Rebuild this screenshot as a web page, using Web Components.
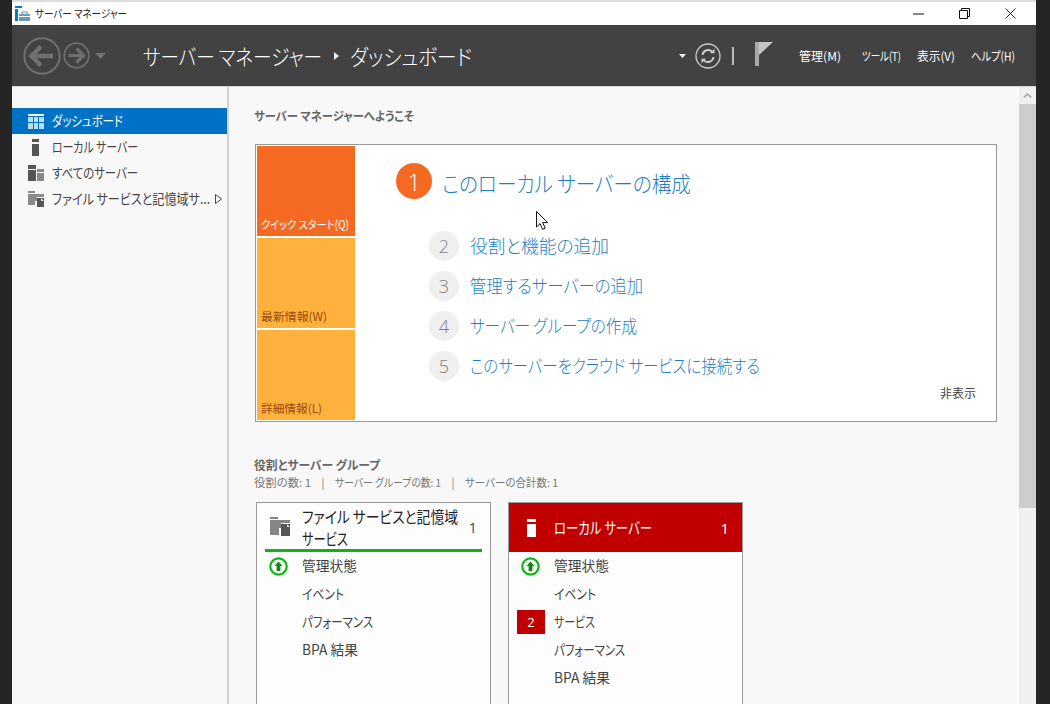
<!DOCTYPE html>
<html lang="ja"><head><meta charset="utf-8"><title>サーバー マネージャー</title>
<style>
html,body{margin:0;padding:0;width:1050px;height:704px;overflow:hidden;background:#252525}
body{font-family:"Noto Sans CJK JP","Noto Sans",sans-serif;font-feature-settings:"palt";color:#444}
</style></head><body>
<sm-app></sm-app>
<script>
const base=`:host{font-feature-settings:"palt";box-sizing:border-box}*{box-sizing:border-box}svg{display:block;flex:none}`;
customElements.define('fit-text',class extends HTMLElement{
  constructor(){super();this.attachShadow({mode:'open'})}
  connectedCallback(){
    const w=+this.getAttribute('w');
    this.shadowRoot.innerHTML=`<style>:host{display:inline-block;width:${w}px;white-space:pre}span{display:inline-block;width:max-content;transform-origin:0 50%}</style><span><slot></slot></span>`;
    const s=this.shadowRoot.querySelector('span');
    const n=s.getBoundingClientRect().width;
    if(n>0)s.style.transform=`scaleX(${w/n})`;
  }
});
function def(name,html){
  customElements.define(name,class extends HTMLElement{
    constructor(){super();this.attachShadow({mode:'open'})}
    connectedCallback(){
      const a=n=>this.getAttribute(n)||'';
      this.shadowRoot.innerHTML='<style>'+base+html.css+'</style>'+(typeof html.html==='function'?html.html(a):html.html);
    }
  });
}
const ICONS={
 dash:`<svg width="16" height="15" viewBox="0 0 16 15"><rect width="16" height="2" fill="#fff"/><g fill="#bcdcf2"><rect y="3" width="5" height="5"/><rect x="6" y="3" width="4" height="5"/><rect x="11" y="3" width="5" height="5"/><rect y="9" width="5" height="6"/><rect x="6" y="9" width="4" height="6"/><rect x="11" y="9" width="5" height="6"/></g></svg>`,
 server:`<svg width="16" height="17" viewBox="0 0 16 17"><rect x="4" width="7" height="3" fill="#555"/><rect x="4" y="5" width="7" height="12" fill="#555"/></svg>`,
 all:`<svg width="16" height="16" viewBox="0 0 16 16"><rect width="8" height="4" fill="#555"/><rect y="5" width="8" height="11" fill="#555"/><rect x="9" y="4" width="7" height="3" fill="#888"/><rect x="9" y="8" width="7" height="8" fill="#888"/></svg>`,
 file:`<svg width="16" height="16" viewBox="0 0 16 16"><path d="M0 0h7v2H0zM0 3h16v3H9v4H7v4H0z" fill="#8a8a8a"/><path d="M9 7h7v9H9z" fill="#555"/><path d="M13 7l3 3h-3z" fill="#ddd"/></svg>`,
 file2:`<svg width="20" height="20" viewBox="0 0 20 20"><path d="M0 0h8v2H0zM0 3h20v3H11v5H9v7H0z" fill="#858585"/><path d="M11 7h9v12h-9z" fill="#555"/><path d="M17 7l3 3h-3z" fill="#ddd"/></svg>`,
 up:`<svg width="19" height="19" viewBox="0 0 19 19"><circle cx="9.500" cy="9.500" r="8.200" fill="#fff" stroke="#0fb40f" stroke-width="2.200"/><path d="M9.500 4.500l4 4.600H11.400v5H7.600v-5H5.500z" fill="#0a8f0a"/></svg>`
};
def('sm-titlebar',{css:`:host{display:flex;align-items:center;height:23px;background:#fff;padding-left:3px;font-size:11px;color:#222}
 .t{margin-left:5px;line-height:23px;flex:1}.w{display:flex}.w svg{margin-right:35px}.w svg:last-child{margin-right:20px}`,
 html:`<svg width="15" height="15" viewBox="0 0 15 15"><path d="M0 0h7v2H0zM0 3h3v12H0z" fill="#0a78c8"/><path d="M4 8h11v7H4z" fill="#6d9ab5"/><path d="M7 8V6h5v2" fill="none" stroke="#6d9ab5" stroke-width="1.200"/><path d="M4 10.500h11" stroke="#fff"/></svg>
 <span class="t"><fit-text w="92">サーバー マネージャー</fit-text></span>
 <div class="w"><svg width="11" height="11" viewBox="0 0 11 11"><path d="M0 6h11" stroke="#111"/></svg>
 <svg width="11" height="11" viewBox="0 0 11 11" fill="none" stroke="#111"><path d="M.5 2.500h8v8h-8zM2.500 2.500v-2h8v8h-2"/></svg>
 <svg width="11" height="11" viewBox="0 0 11 11"><path d="M.5.500l10 10M10.500.500l-10 10" stroke="#222"/></svg></div>`});
def('sm-header',{css:`:host{display:flex;align-items:center;height:62px;background:#424242;color:#fff;border-bottom:1px solid #d6d6d6;padding-left:11px;padding-right:21px}
 .nav{display:flex;align-items:center;width:120px}
 .crumb{display:flex;align-items:center;font-size:22px;font-weight:300;flex:1;line-height:30px;margin-top:-2px}
 .crumb svg{margin:2px 11px 0 12px}
 .tools{display:flex;align-items:center}
 .menu{display:flex;font-size:12px;align-items:center;margin-left:26px}`,
 html:`<div class="nav">
 <svg width="38" height="38" viewBox="0 0 38 38" fill="none" stroke="#6f6f6f"><circle cx="19" cy="19" r="17.700" stroke-width="2"/><path d="M30 19H9M18 9.500L8.500 19l9.500 9.500" stroke-width="4.500"/></svg>
 <svg style="margin-left:2px" width="27" height="27" viewBox="0 0 27 27" fill="none" stroke="#6f6f6f"><circle cx="13.500" cy="13.500" r="12.300" stroke-width="1.700"/><path d="M5.500 13.500h15M13.500 6.500l7 7-7 7" stroke-width="3.200"/></svg>
 <svg style="margin-left:5px" width="11" height="6" viewBox="0 0 11 6"><path d="M0 0h11L5.500 6z" fill="#6f6f6f"/></svg></div>
 <div class="crumb"><fit-text w="179">サーバー マネージャー</fit-text><svg width="5" height="8" viewBox="0 0 5 8"><path d="M0 0l5 4-5 4z" fill="#eee"/></svg><fit-text w="122">ダッシュボード</fit-text></div>
 <div class="tools">
 <svg width="7" height="4" viewBox="0 0 7 4"><path d="M0 0h7L3.500 4z" fill="#eee"/></svg>
 <svg style="margin-left:9px" width="26" height="26" viewBox="0 0 26 26" fill="none" stroke="#ccc"><circle cx="13" cy="13" r="12" stroke-width="1.300"/><path d="M7.500 12a5.700 5.700 0 0 1 10-3M18.500 14a5.700 5.700 0 0 1-10 3" stroke-width="1.900"/><path d="M19.500 5.700v4.600h-4.600zM6.500 20.300v-4.600h4.600z" fill="#ccc" stroke="none"/></svg>
 <svg style="margin-left:11px" width="2" height="18" viewBox="0 0 2 18"><rect width="2" height="18" fill="#bbb"/></svg>
 <svg style="margin-left:21px;margin-bottom:3px" width="18" height="24" viewBox="0 0 18 24"><rect width="4" height="24" fill="#a8a8a8"/><path d="M4 0h14L4 13z" fill="#c6c6c6"/></svg>
 <div class="menu"><fit-text w="42">管理(M)</fit-text><fit-text w="39" style="margin-left:21px">ツール(T)</fit-text><fit-text w="38" style="margin-left:16px">表示(V)</fit-text><fit-text w="44" style="margin-left:16px">ヘルプ(H)</fit-text></div>
 </div>`});
def('nav-item',{css:`:host{display:flex;align-items:center;height:26px;padding-left:16px;font-size:14px;color:#444}
 :host([sel]){background:#0072c6;color:#fff}
 .l{margin:0 0 2px 8px;flex:1;white-space:nowrap}.c{margin-right:5px}`,
 html:a=>`${ICONS[a('icon')]}<span class="l"><slot></slot></span>${a('more')?'<svg class="c" width="7" height="10" viewBox="0 0 7 10"><path d="M.5.500l6 4.500-6 4.500z" fill="#fff" stroke="#444"/></svg>':''}`});
def('sm-sidebar',{css:`:host{display:flex;flex-direction:column;width:217px;padding-top:21px;background:#f8f8f8;border-right:2px solid #d2d2d2;flex:none}`,html:`<slot></slot>`});
def('qs-tile',{css:`:host{display:flex;align-items:flex-end;flex:1;background:#ffb13d;color:#9a4a10;font-size:11.500px;padding:0 0 2px 4px;line-height:20px;white-space:nowrap}
 :host([on]){background:#f56a23;color:#fff}`,html:`<slot></slot>`});
def('qs-step',{css:`:host{display:flex;align-items:center;height:30px;margin-bottom:10px;color:#1d7fc6;font-size:18px;font-weight:300;white-space:nowrap}
 .l{margin-bottom:2px}
 .n{width:30px;height:30px;border-radius:50%;background:#efefef;color:#808080;display:flex;align-items:center;justify-content:center;font-size:18px;margin-right:11px;font-family:"Open Sans",sans-serif;font-weight:300}`,
 html:a=>`<span class="n">${a('n')}</span><span class="l"><slot></slot></span>`});
def('quick-start',{css:`:host{display:flex;width:742px;height:278px;margin-left:1px;border:1px solid #999;background:#fff;padding:1px 0 1px 1px}
 .tiles{display:flex;flex-direction:column;gap:2px;width:98px}
 .main{flex:1;display:flex;flex-direction:column;padding:17px 0 0 41px}
 .first{display:flex;align-items:center;height:36px;margin-bottom:32px;color:#1d7fc6;font-size:22px;font-weight:300;white-space:nowrap}
 .first fit-text{margin-top:2px}
 .c{width:36px;height:36px;border-radius:50%;background:#f56a23;color:#fff;display:flex;align-items:center;justify-content:center;font-size:24px;margin-right:10px;font-family:"Open Sans",sans-serif;font-weight:300}
 .steps{padding-left:33px}
 .hide{align-self:flex-end;font-size:12px;color:#444;margin:-7px 20px 0 0}`,
 html:`<div class="tiles"><qs-tile on><fit-text w="88">クイック スタート(Q)</fit-text></qs-tile><qs-tile><fit-text w="66">最新情報(W)</fit-text></qs-tile><qs-tile><fit-text w="61">詳細情報(L)</fit-text></qs-tile></div>
 <div class="main"><div class="first"><span class="c">1</span><fit-text w="249">このローカル サーバーの構成</fit-text></div>
 <div class="steps"><qs-step n="2"><fit-text w="139">役割と機能の追加</fit-text></qs-step><qs-step n="3"><fit-text w="173">管理するサーバーの追加</fit-text></qs-step><qs-step n="4"><fit-text w="167">サーバー グループの作成</fit-text></qs-step><qs-step n="5"><fit-text w="290">このサーバーをクラウド サービスに接続する</fit-text></qs-step></div>
 <span class="hide">非表示</span></div>`});
def('card-row',{css:`:host{display:flex;align-items:center;height:28px;font-size:14px;color:#444}
 .i{width:45px;display:flex;align-items:center;padding-left:12px}
 .l{margin-bottom:2px}
 .b{width:28px;height:24px;margin-left:-4px;background:#c00000;color:#fff;font-size:13px;display:flex;align-items:center;justify-content:center;font-family:"Open Sans",sans-serif;flex:none}`,
 html:a=>`<span class="i">${a('up')?ICONS.up:a('badge')?`<span class="b">${a('badge')}</span>`:''}</span><span class="l"><slot></slot></span>`});
def('role-card',{css:`:host{display:block;width:235px;height:260px;border:1px solid #999;background:#fdfdfd;flex:none}
 .h{display:flex;align-items:center;height:49px;font-size:16px;line-height:22px;color:#222;margin:0 8px;padding:1px 0 0 5px;border-bottom:3px solid #0fb40f}
 .h .t{margin-left:12px;width:160px;display:flex;flex-direction:column}
 .h fit-text{display:block}
 .h .n{margin-left:auto;margin-right:5px;font-size:15px;color:#2f4d66;font-family:"Open Sans",sans-serif}
 :host([red]) .h{margin:0;padding:0 0 0 18px;background:#c00000;color:#fff;border:0}
 :host([red]) .h .t{margin:0 0 2px 18px}
 :host([red]) .h .n{color:#fff;margin-right:13px}`,
 html:a=>`<div class="h">${a('ic')==='server'?'<svg width="9" height="18" viewBox="0 0 9 18"><rect width="9" height="3" fill="#fff"/><rect y="5" width="9" height="13" fill="#fff"/></svg>':ICONS.file2}<span class="t">${a('ic')==='server'?'<fit-text w="98">ローカル サーバー</fit-text>':'<fit-text w="156">ファイル サービスと記憶域</fit-text><fit-text w="46">サービス</fit-text>'}</span><span class="n">1</span></div><div class="rows"><slot></slot></div>`});
def('sm-scroll',{css:`:host{display:flex;flex-direction:column;width:17px;background:#f0f0f0;flex:none}
 .b{height:17px;display:flex;align-items:center;justify-content:center}.t{height:404px;background:#cdcdcd}`,
 html:`<div class="b"><svg width="9" height="5" viewBox="0 0 9 5"><path d="M.7 4.500L4.500 1l3.800 3.500" fill="none" stroke="#a6a6a6" stroke-width="1.500"/></svg></div><div class="t"></div>`});
def('sm-cursor',{css:`:host{position:absolute;left:536px;top:211px;width:12px;height:20px;display:block}`,
 html:`<svg width="12" height="20" viewBox="0 0 12 20"><path d="M.5.500v15.500l3.600-3.400 2.500 5.800 2.600-1.200-2.500-5.600h5z" fill="#fff" stroke="#111"/></svg>`});
def('sm-content',{css:`:host{display:block;flex:1;background:#f8f8f8;padding:21px 0 0 25px;overflow:hidden;font-size:12px;color:#555}
 h2{font-size:12px;font-weight:700;margin:0;line-height:16px;color:#666}
 .w{margin-bottom:20px}
 .sub{display:flex;font-size:11px;line-height:16px;color:#777;margin:1px 0 12px;white-space:pre}
 .sub i{font-style:normal;width:24px;text-align:center}
 .cards{display:flex;gap:17px;margin-left:2px}
 .sec{margin-top:35px}`,
 html:`<h2 class="w"><fit-text w="160">サーバー マネージャーへようこそ</fit-text></h2><quick-start></quick-start>
 <div class="sec"><h2><fit-text w="126">役割とサーバー グループ</fit-text></h2><div class="sub"><fit-text w="57">役割の数: 1</fit-text><i>|</i><fit-text w="106">サーバー グループの数: 1</fit-text><i>|</i><fit-text w="93">サーバーの合計数: 1</fit-text></div>
 <div class="cards"><role-card ic="file"><card-row up="1"><fit-text w="55">管理状態</fit-text></card-row><card-row><fit-text w="42">イベント</fit-text></card-row><card-row><fit-text w="71">パフォーマンス</fit-text></card-row><card-row><fit-text w="56">BPA 結果</fit-text></card-row></role-card>
 <role-card red ic="server"><card-row up="1"><fit-text w="55">管理状態</fit-text></card-row><card-row><fit-text w="42">イベント</fit-text></card-row><card-row badge="2"><fit-text w="41">サービス</fit-text></card-row><card-row><fit-text w="71">パフォーマンス</fit-text></card-row><card-row><fit-text w="56">BPA 結果</fit-text></card-row></role-card></div></div>`});
def('sm-app',{css:`:host{display:flex;flex-direction:column;width:1024px;height:704px;margin-left:12px;border-top:2px solid #dcdcdc;overflow:hidden}
 .body{flex:1;display:flex;min-height:0}`,
 html:`<sm-titlebar></sm-titlebar><sm-header></sm-header><div class="body"><sm-sidebar><nav-item sel icon="dash"><fit-text w="71">ダッシュボード</fit-text></nav-item><nav-item icon="server"><fit-text w="86">ローカル サーバー</fit-text></nav-item><nav-item icon="all"><fit-text w="86">すべてのサーバー</fit-text></nav-item><nav-item icon="file" more="1"><fit-text w="158">ファイル サービスと記憶域サ...</fit-text></nav-item></sm-sidebar><sm-content></sm-content><sm-scroll></sm-scroll></div><sm-cursor></sm-cursor>`});
</script></body></html>
